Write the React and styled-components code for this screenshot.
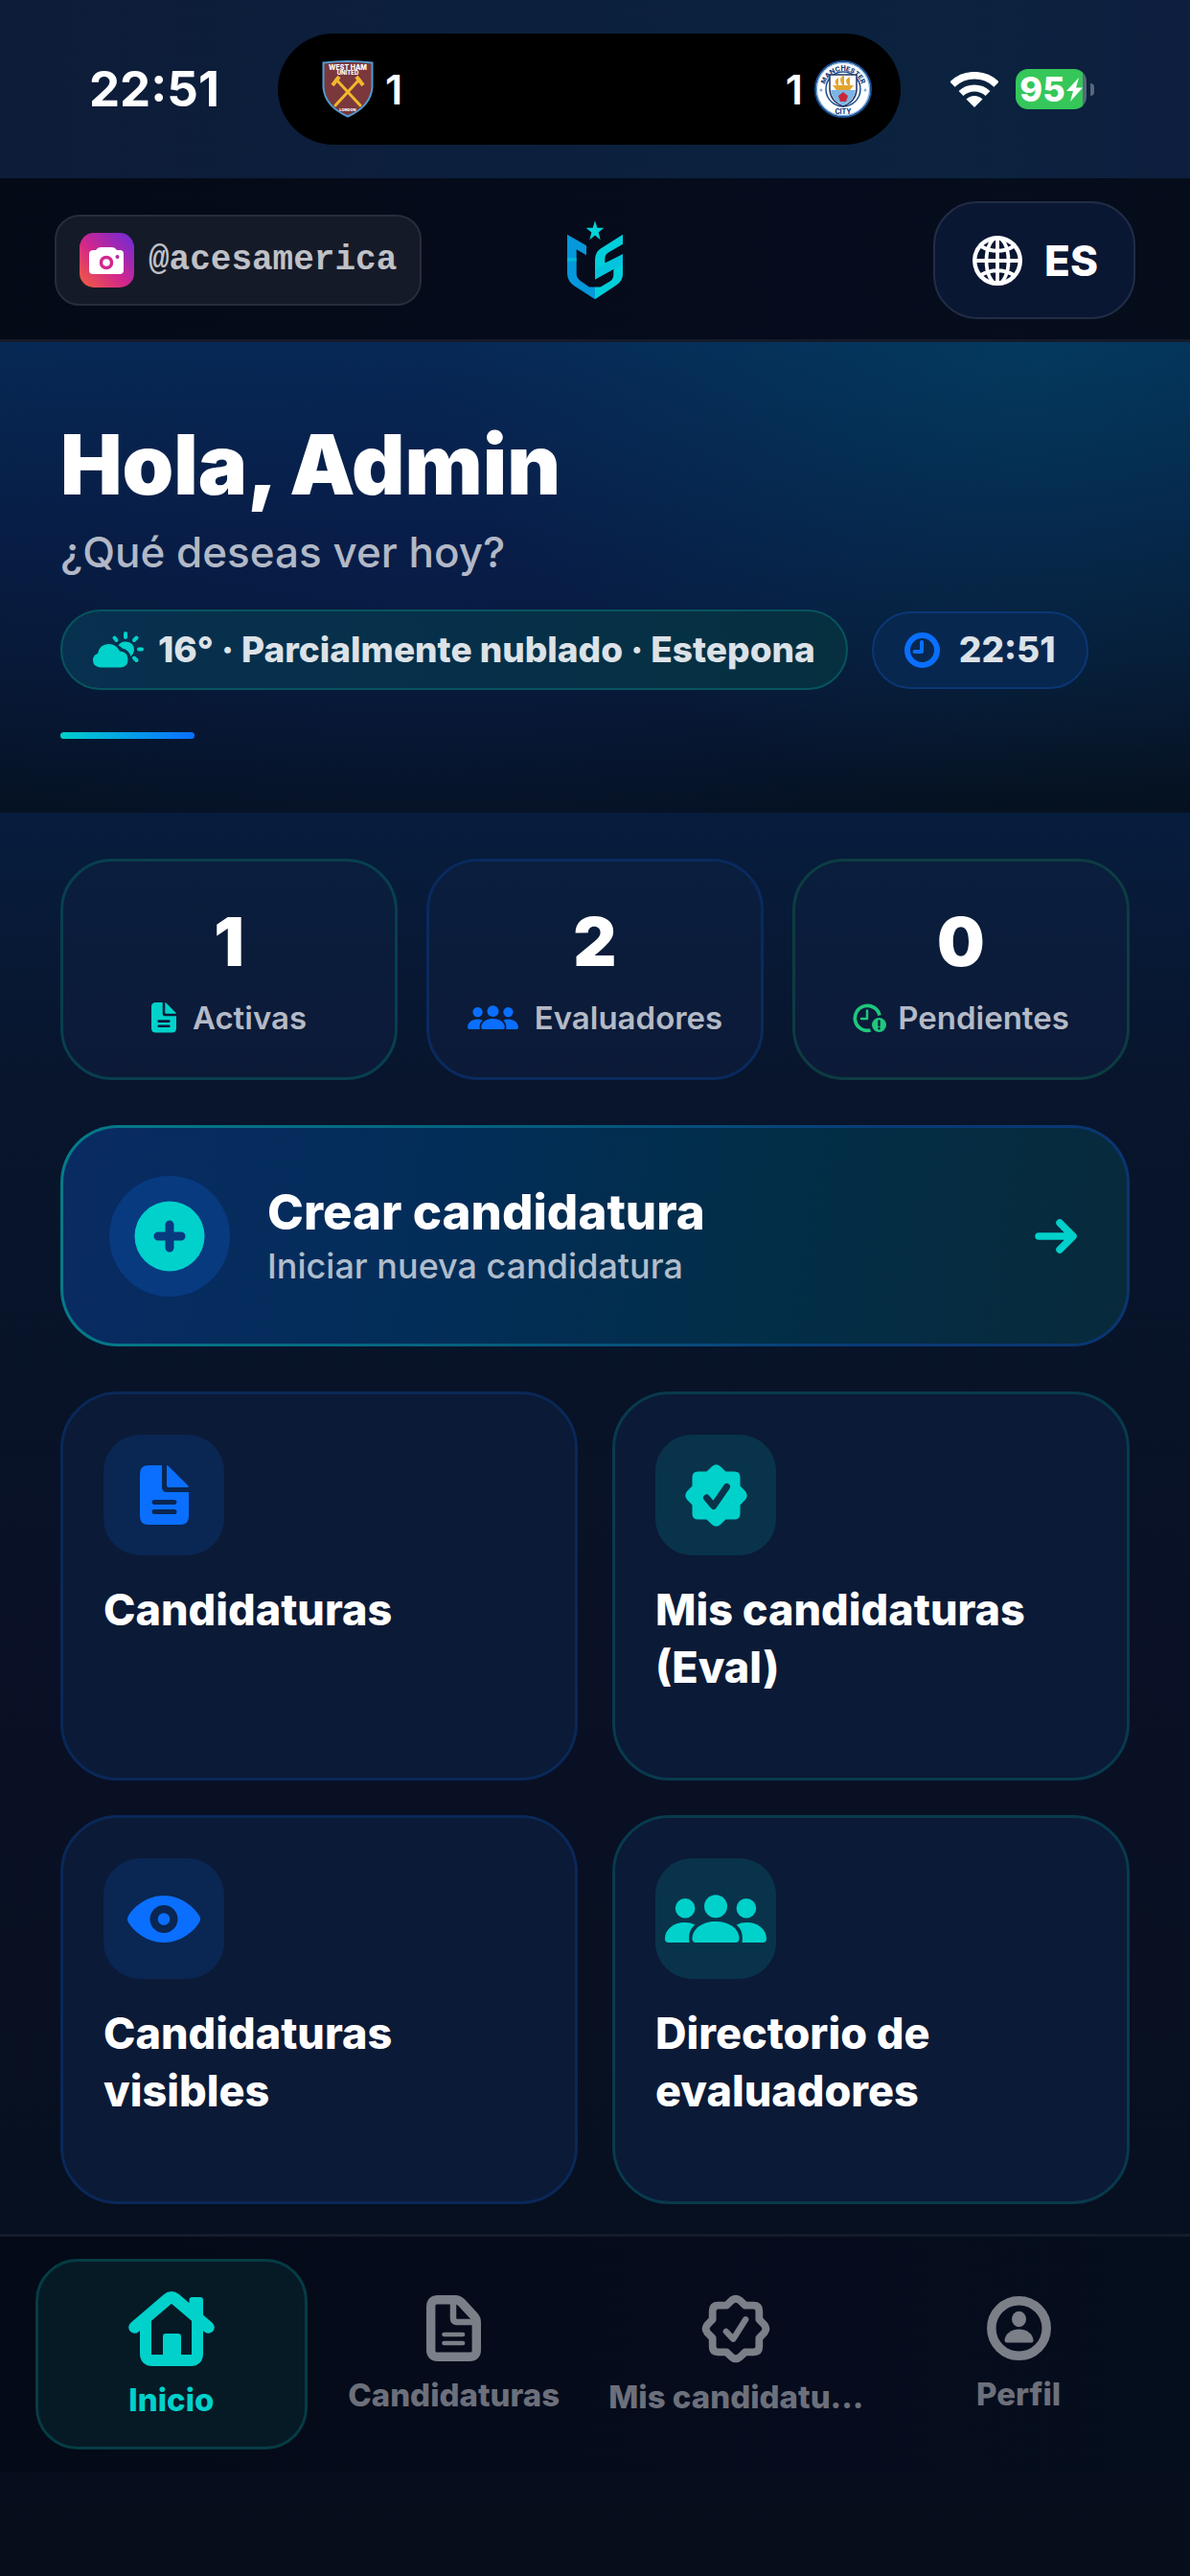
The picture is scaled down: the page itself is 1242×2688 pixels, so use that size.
import React, { useState } from "react";
import styled, { createGlobalStyle } from "styled-components";

const TEAL = "#00d1cb";
const BLUE = "#0a6fff";
const GREEN = "#1fc77c";

const GlobalStyle = createGlobalStyle`
*{ box-sizing: border-box; }
body{
  margin: 0;
  background: #060e1c;
  color: white;
  font-family: Inter, "Liberation Sans", sans-serif;
}
button{
  font-family: inherit;
  color: inherit;
  cursor: pointer;
}
h1, h2, p{ margin: 0; }
svg{ display: block; flex: none; }
`
const Screen = styled.div`
min-height: 100vh;
display: flex;
flex-direction: column;
background: linear-gradient(180deg, #0d1d3a 0px, #071d3e 850px, #08152c 1130px, #081328 1450px, #0a1025 1750px, #071020 2300px, #060d1b 2688px);
`
const StatusBar = styled.div`
height: 186px;
padding: 0 100px 0 93px;
display: grid;
grid-template-columns: 197px 650px 1fr;
align-items: center;
background: linear-gradient(90deg, #0d1c39, #0b213e 60%, #0b233f 80%, #0e1e3e);
`
const Clock = styled.span`
font-size: 51px;
font-weight: 700;
line-height: 60px;
`
const Island = styled.div`
height: 116px;
padding: 0 30px 0 46px;
border-radius: 58px;
background: black;
display: flex;
align-items: center;
justify-content: space-between;
`
const Score = styled.span`
display: flex;
align-items: center;
gap: 12px;
font-size: 43px;
font-weight: 600;
line-height: 52px;
`
const Indicators = styled.div`
display: flex;
align-items: center;
justify-content: flex-end;
gap: 18px;
`
const BatteryWrap = styled.div`
display: flex;
align-items: center;
gap: 4px;
`
const BatteryBody = styled.span`
width: 74px;
height: 42px;
border-radius: 13px;
background: linear-gradient(90deg, #35c759 95%, #56687c 95%);
display: flex;
align-items: center;
justify-content: center;
gap: 1px;
font-size: 36px;
font-weight: 800;
`
const BatteryNub = styled.span`
width: 4px;
height: 13px;
border-radius: 0 4px 4px 0;
background: #56687c;
`
const Header = styled.header`
padding: 24px 57px 21px;
border-bottom: 3px solid #151b2b;
display: grid;
grid-template-columns: 1fr auto 1fr;
align-items: center;
background: linear-gradient(90deg, #040a16, #060c1d 70%, #050d1b);
`
const HandleLink = styled.a`
justify-self: start;
height: 95px;
padding: 0 24px;
border: 2px solid #272d3a;
border-radius: 26px;
background: #151a28;
display: flex;
align-items: center;
gap: 15px;
color: #bfc1c6;
font-family: "Liberation Mono", monospace;
font-size: 36px;
font-weight: 700;
text-decoration: none;
`
const LanguageButton = styled.button`
justify-self: end;
height: 123px;
padding: 0 37px 0 39px;
border: 2px solid #212c45;
border-radius: 46px;
background: #0a1733;
display: flex;
align-items: center;
gap: 23px;
font-size: 44px;
font-weight: 800;
`
const Hero = styled.section`
padding: 76px 63px 77px;
background:
  radial-gradient(620px 480px at 86% 0%, rgba(0, 80, 108, 0.4), rgba(0, 60, 80, 0) 100%),
  radial-gradient(760px 420px at 36% 46%, rgba(10, 30, 92, 0.35), rgba(8, 26, 72, 0) 100%),
  linear-gradient(180deg, #062a54 0%, #071d40 42%, #07172f 75%, #05111f 100%);
`
const Greeting = styled.h1`
font-size: 86px;
font-weight: 900;
line-height: 104px;
`
const Question = styled.p`
margin-top: 12px;
font-size: 44px;
font-weight: 500;
line-height: 54px;
color: #b2b8c6;
`
const PillRow = styled.div`
margin-top: 33px;
display: flex;
align-items: center;
gap: 25px;
`
const Pill = styled.span`
height: ${p => p.$tone === "teal" ? 84 : 81}px;
padding: 0 32px;
border: 2px solid ${p => p.$tone === "teal" ? "#07545f" : "#0b3775"};
border-radius: 42px;
background: ${p => p.$tone === "teal" ? "linear-gradient(90deg, #08304f, #06304a 50%, #06303f)" : "#08274f"};
display: flex;
align-items: center;
gap: ${p => p.$tone === "teal" ? 15 : 20}px;
font-size: 37px;
font-weight: 800;
line-height: 42px;
white-space: nowrap;
color: #dce2e7;
`
const Accent = styled.div`
width: 140px;
height: 7px;
margin-top: 44px;
border-radius: 4px;
background: linear-gradient(90deg, #00d1cb, #0a6fff);
`
const Main = styled.main`
padding: 48px 63px 31px;
display: flex;
flex-direction: column;
gap: 47px;
`
const Stats = styled.div`
display: grid;
grid-template-columns: repeat(3, 1fr);
gap: 30px;
`
const StatCard = styled.div`
height: 231px;
padding-top: 42px;
border: 3px solid ${p => p.$line};
border-radius: 54px;
background: linear-gradient(180deg, #0a1e3d, #0c1a38);
display: flex;
flex-direction: column;
align-items: center;
gap: 18px;
`
const StatValue = styled.strong`
font-size: 70px;
font-weight: 900;
line-height: 84px;
`
const StatLabel = styled.span`
display: flex;
align-items: center;
gap: ${p => p.$gap}px;
font-size: 33px;
font-weight: 600;
line-height: 38px;
color: #b4bac6;
`
const CreateButton = styled.button`
height: 231px;
padding: 0 52px 0 48px;
border: 3px solid transparent;
border-radius: 60px;
background:
  linear-gradient(100deg, #092b62, #032d59 35%, #022e48 65%, #082a3b) padding-box,
  linear-gradient(100deg, #057c8a, #06607f 40%, #083b78 75%, #0a3570) border-box;
display: flex;
align-items: center;
gap: 39px;
text-align: left;
`
const CreateIcon = styled.span`
width: 126px;
height: 126px;
border-radius: 50%;
background: #083a80;
display: flex;
align-items: center;
justify-content: center;
`
const CreateText = styled.span`
flex: 1;
display: flex;
flex-direction: column;
`
const CreateTitle = styled.span`
font-size: 51px;
font-weight: 800;
line-height: 62px;
`
const CreateHint = styled.span`
font-size: 36px;
font-weight: 500;
line-height: 50px;
color: #b0bdcc;
`
const Tiles = styled.div`
display: grid;
grid-template-columns: repeat(2, 1fr);
gap: 36px;
`
const Tile = styled.button`
min-height: 406px;
padding: 42px;
border: 3px solid ${p => p.$tone === "teal" ? "#083a4d" : "#0a2858"};
border-radius: 60px;
background: #0b1a36;
display: flex;
flex-direction: column;
align-items: flex-start;
gap: 27px;
text-align: left;
`
const TileIcon = styled.span`
width: 126px;
height: 126px;
border-radius: 38px;
background: ${p => p.$tone === "teal" ? "#09334b" : "#0a2652"};
display: flex;
align-items: center;
justify-content: center;
`
const TileTitle = styled.h2`
font-size: 45px;
font-weight: 800;
line-height: 60px;
`
const TabBar = styled.nav`
padding: 23px 37px 24px;
border-top: 3px solid #141b2a;
background: linear-gradient(90deg, #040a17, #060c1d 70%, #050e1d);
display: grid;
grid-template-columns: repeat(4, minmax(0, 1fr));
gap: 11px;
`
const Tab = styled.a`
height: 199px;
border: 3px solid ${p => p.$active ? "#053c45" : "transparent"};
border-radius: 44px;
background: ${p => p.$active ? "#061a26" : "transparent"};
display: flex;
flex-direction: column;
align-items: center;
justify-content: center;
gap: 16px;
color: ${p => p.$active ? TEAL : "#6c707b"};
font-size: 33px;
font-weight: 800;
line-height: 38px;
white-space: nowrap;
text-decoration: none;
`

const SEAL = "M22.5 7.5L28 2.2Q32.5-1.6 37 2.2L42.5 7.5H51.5Q57.5 7.5 57.5 13.5V22.5L62.8 28Q66.6 32.5 62.8 37L57.5 42.5V51.5Q57.5 57.5 51.5 57.5H42.5L37 62.8Q32.5 66.6 28 62.8L22.5 57.5H13.5Q7.5 57.5 7.5 51.5V42.5L2.2 37Q-1.6 32.5 2.2 28L7.5 22.5V13.5Q7.5 7.5 13.5 7.5Z";

const HammersCrest = () => (
  <svg width="54" height="60" viewBox="0 0 54 60">
    <path d="M1.5 2.5Q27-.5 52.5 2.5V28Q51 48 27 58.5Q3 48 1.5 28Z" fill="#7a383c" stroke="#4f9bd0" strokeWidth="2" />
    <g stroke="#f3b72c" strokeWidth="3" strokeLinecap="round">
      <path d="M15 20L40 47M39 20L14 47" />
      <path d="M11 26L18 17M43 26L36 17" strokeWidth="4" strokeLinecap="butt" />
    </g>
    <g fill="#fff" fontFamily="Inter, sans-serif" fontWeight="800" textAnchor="middle">
      <text x="27" y="10" fontSize="7">WEST HAM</text>
      <text x="27" y="15" fontSize="6">UNITED</text>
      <text x="27" y="53" fontSize="4">LONDON</text>
    </g>
  </svg>
)
const CityCrest = () => (
  <svg width="60" height="60" viewBox="0 0 60 60">
    <circle cx="30" cy="30" r="29" fill="#fff" stroke="#1c4f93" strokeWidth="2" />
    <circle cx="30" cy="30" r="27.500" fill="none" stroke="#6ba6dc" strokeWidth="1" />
    <circle cx="30" cy="30" r="18" fill="#fff" stroke="#1c4f93" strokeWidth="1.500" />
    <path d="M16 15H44V31Q43 43 30 48Q17 43 16 31Z" fill="#fff" stroke="#22325c" strokeWidth="1.500" />
    <path d="M17 31H43Q42 42 30 47Q18 42 17 31Z" fill="#7db4e3" />
    <path d="M19 26H41L37 31H23Z" fill="#e2a52d" />
    <path d="M24 25Q21 22 24 20ZM30 25Q26 20 30 17ZM36 25Q32 21 36 19Z" fill="#e2a52d" stroke="#e2a52d" strokeWidth="2" />
    <path d="M30 33L35 37L33 43H27L25 37Z" fill="#c6283a" />
    <path id="cityTop" d="M10 31A20 20 0 0 1 50 31" fill="none" />
    <g fill="#1d3f7d" fontFamily="Inter, sans-serif" fontWeight="800">
      <text fontSize="7" textAnchor="middle"><textPath href="#cityTop" startOffset="50%">MANCHESTER</textPath></text>
      <text x="30" y="56" fontSize="7" textAnchor="middle">CITY</text>
    </g>
    <circle cx="7" cy="31" r="1.500" fill="#7db4e3" />
    <circle cx="53" cy="31" r="1.500" fill="#7db4e3" />
  </svg>
)
const WifiIcon = () => (
  <svg width="50" height="37" viewBox="0 0 50 37" fill="none" stroke="#fff">
    <path d="M2 13A33 33 0 0 1 48 13" strokeWidth="7.500" />
    <path d="M11 22.500A20.500 20.500 0 0 1 39 22.500" strokeWidth="7" />
    <path d="M25 37L16.500 28.500A12 12 0 0 1 33.500 28.500Z" fill="#fff" stroke="none" />
  </svg>
)
const BoltIcon = () => (
  <svg width="17" height="25" viewBox="0 0 17 25">
    <path d="M13 0L0 14H7L4 25L17 10.500H10Z" fill="#fff" />
  </svg>
)
const CameraBadge = () => (
  <svg width="57" height="57" viewBox="0 0 57 57">
    <defs>
      <linearGradient id="insta" x1="0" y1="1" x2="1" y2="0">
        <stop offset="0" stopColor="#f2603a" />
        <stop offset=".45" stopColor="#d3268c" />
        <stop offset="1" stopColor="#6a2bdc" />
      </linearGradient>
    </defs>
    <rect width="57" height="57" rx="15" fill="url(#insta)" />
    <path d="M15 18H17Q19 15 22 15H34Q37 15 39 18H42Q46 18 46 22V39Q46 43 42 43H14Q10 43 10 39V22Q10 18 15 18Z" fill="#fff" />
    <circle cx="28" cy="31" r="5.500" fill="#fff" stroke="#d3268c" strokeWidth="3.500" />
    <circle cx="39.500" cy="25" r="2" fill="#b52aa0" />
  </svg>
)
const Logo = () => (
  <svg width="60" height="83" viewBox="93 60 180 248">
    <path d="M183 60L190 83H211L194 97L200 120L183 106L166 120L172 97L155 83H176Z" fill="#00d3da" />
    <path d="M96 104L156 138V168L125 150V226Q125 240 138 249L165 268H183V306L120 266Q96 250 96 225Z" fill="#0598db" />
    <path d="M96 177H125V187H96Z" fill="#00b9d8" />
    <path d="M270 104V134L225 160Q214 167 214 180V193L270 165V228Q270 248 250 262L183 306V268H200L230 250Q241 243 241 230V212L183 244V182Q183 160 200 148Z" fill="#00cfdb" />
    <path d="M183 244V215L270 165V196Z" fill="#04c3dc" />
  </svg>
)
const GlobeIcon = () => (
  <svg width="52" height="52" viewBox="0 0 52 52" fill="none" stroke="#fff" strokeWidth="3.800">
    <circle cx="26" cy="26" r="23.800" strokeWidth="4.400" />
    <ellipse cx="26" cy="26" rx="11.500" ry="24" />
    <path d="M26 2V50M2 26H50M8 10.500Q26 21 44 10.500M8 41.500Q26 31 44 41.500" />
  </svg>
)
const CloudSunIcon = () => (
  <svg width="53" height="38" viewBox="0 0 53 38" fill={TEAL}>
    <path d="M8 37.500Q0 37 0 30Q0 24.500 5 23Q7 13 16.500 13Q24.500 13 28 20.500Q36.500 21 36.500 29Q36.500 37 29 37.500Z" />
    <path d="M26.500 14.500Q29 10.500 34 10.500Q43 11 43 19.500Q42.500 23.500 39.500 26Q37.500 19 30.500 17.500Q29 15.500 26.500 14.500Z" />
    <path d="M34 2V6M48 18.500H51M43 9L45.500 6.500M24.500 9L22.500 6.500M43 27.500L45.500 30" stroke={TEAL} strokeWidth="4" strokeLinecap="round" />
  </svg>
)
const ClockIcon = () => (
  <svg width="37" height="37" viewBox="0 0 37 37" fill="none" stroke={BLUE} strokeLinecap="round" strokeLinejoin="round">
    <circle cx="18.500" cy="18.500" r="15.500" strokeWidth="6" />
    <path d="M18 10V20H10.500" strokeWidth="4" />
  </svg>
)
const FileIcon = ({ width, color }) => (
  <svg width={width} viewBox="0 0 51 62" fill={color}>
    <path fillRule="evenodd" d="M9 0H23V23Q23 28 28 28H51V53Q51 62 42 62H9Q0 62 0 53V9Q0 0 9 0ZM15 36A2.500 2.500 0 0 0 15 41H36A2.500 2.500 0 0 0 36 36ZM15 46A2.500 2.500 0 0 0 15 51H36A2.500 2.500 0 0 0 36 46Z" />
    <path d="M28 0Q29 0 30 1L50.500 21.500Q51 23 50 23H30Q28 23 28 21Z" />
  </svg>
)
const PeopleIcon = ({ width, color }) => (
  <svg width={width} viewBox="0 0 108 51" fill={color}>
    <circle cx="21.500" cy="14.500" r="10.500" />
    <circle cx="54" cy="12.500" r="12.200" />
    <circle cx="86.500" cy="14.500" r="10.500" />
    <path d="M4 51Q0 51 0 47C0 37 9 29.500 21 29.500Q27 29.500 32 32C26 37 25 43 26 51Z" />
    <path d="M104 51Q108 51 108 47C108 37 99 29.500 87 29.500Q81 29.500 76 32C82 37 83 43 82 51Z" />
    <path d="M33 51Q29 51 29 47C29 36 40 28.500 54 28.500S79 36 79 47Q79 51 75 51Z" />
  </svg>
)
const PendingIcon = () => (
  <svg width="35" height="31" viewBox="0 0 35 31" fill="none" stroke={GREEN} strokeLinecap="round" strokeLinejoin="round">
    <path d="M28 12.500A13 13 0 1 0 18.500 28" strokeWidth="3.700" strokeLinecap="butt" />
    <path d="M15 7.500V16H9" strokeWidth="2.500" />
    <circle cx="27.500" cy="22.500" r="7.500" fill={GREEN} stroke="none" />
    <path d="M27.500 18.500V23M27.500 26V26.200" stroke="#0b1c39" strokeWidth="2.400" />
  </svg>
)
const PlusIcon = () => (
  <svg width="74" height="74" viewBox="0 0 74 74">
    <circle cx="37" cy="37" r="36.500" fill={TEAL} />
    <path d="M37 25V49M25 37H49" stroke="#083a80" strokeWidth="9" strokeLinecap="round" />
  </svg>
)
const ArrowIcon = () => (
  <svg width="44" height="36" viewBox="0 0 44 36" fill="none" stroke={TEAL} strokeWidth="7.500" strokeLinecap="round" strokeLinejoin="round">
    <path d="M4 18H39M26 4L40 18L26 32" />
  </svg>
)
const SealIcon = () => (
  <svg width="65" height="65" viewBox="0 0 65 65">
    <path d={SEAL} fill={TEAL} />
    <path d="M22.500 35L29.700 43.500L43.500 23.500" fill="none" stroke="#09334b" strokeWidth="7" strokeLinecap="round" strokeLinejoin="round" />
  </svg>
)
const EyeIcon = () => (
  <svg width="76" height="49" viewBox="0 0 76 49" fill={BLUE}>
    <path fillRule="evenodd" d="M38 0C57 0 70 13 75 21Q77 24.500 75 28C70 36 57 49 38 49S6 36 1 28Q-1 24.500 1 21C6 13 19 0 38 0ZM38 10A14.500 14.500 0 1 0 38 39A14.500 14.500 0 1 0 38 10Z" />
    <circle cx="38" cy="24.500" r="6.300" />
  </svg>
)
const HomeIcon = () => (
  <svg width="90" height="78" viewBox="0 0 90 78" fill="none" stroke="currentColor">
    <path d="M6.500 37.500L41 8Q45 4.500 49 8L83.500 37.500" strokeWidth="12.500" strokeLinecap="round" />
    <path d="M18 30V65Q18 72 25 72H65Q72 72 72 65V30" strokeWidth="12" />
    <path d="M36 47Q36 44 39 44H52Q55 44 55 47V68H36ZM63.500 9Q63.500 6 66.500 6H75Q78 6 78 9V32L63.500 22Z" fill="currentColor" stroke="none" />
  </svg>
)
const FileLineIcon = () => (
  <svg width="57" height="69" viewBox="0 0 57 69" fill="none" stroke="#7b7f88" strokeLinejoin="round">
    <path d="M12 4.700H30Q34 4.700 37 8L49.500 21.500Q52.300 24.500 52.300 28V57Q52.300 64.300 45 64.300H12Q4.700 64.300 4.700 57V12Q4.700 4.700 12 4.700Z" strokeWidth="9.400" />
    <path d="M28 6V24Q28 28 32 28H51" strokeWidth="6.500" />
    <path d="M18.500 41H38M18.500 50H38" strokeWidth="4.700" strokeLinecap="round" />
  </svg>
)
const SealLineIcon = () => (
  <svg width="72" height="72" viewBox="-4.500 -4.500 74 74" fill="none" stroke="#7b7f88" strokeLinecap="round" strokeLinejoin="round">
    <path d={SEAL} strokeWidth="8" />
    <path d="M22 35.500L29.700 43.500L43 22.500" strokeWidth="6.500" />
  </svg>
)
const ProfileIcon = () => (
  <svg width="67" height="67" viewBox="0 0 67 67" fill="#7b7f88">
    <circle cx="33.500" cy="33.500" r="28.700" fill="none" stroke="#7b7f88" strokeWidth="9.500" />
    <ellipse cx="33.500" cy="24" rx="7.500" ry="8.300" />
    <path d="M21 48.500Q18.500 48.500 18.500 46C19 39 26 34.500 33.500 34.500S48 39 48.500 46Q48.500 48.500 46 48.500Z" />
  </svg>
)

const stats = [
  { value: 1, label: "Activas", line: "#083f4f", gap: 17, icon: <FileIcon width={26} color={TEAL} /> },
  { value: 2, label: "Evaluadores", line: "#0a2a5e", gap: 17, icon: <PeopleIcon width={53} color={BLUE} /> },
  { value: 0, label: "Pendientes", line: "#0d3c42", gap: 12, icon: <PendingIcon /> },
];
const tiles = [
  { title: "Candidaturas", tone: "blue", icon: <FileIcon width={51} color={BLUE} /> },
  { title: "Mis candidaturas (Eval)", tone: "teal", icon: <SealIcon /> },
  { title: "Candidaturas visibles", tone: "blue", icon: <EyeIcon /> },
  { title: "Directorio de evaluadores", tone: "teal", icon: <PeopleIcon width={106} color={TEAL} /> },
];
const tabs = [
  { label: "Inicio", icon: <HomeIcon /> },
  { label: "Candidaturas", icon: <FileLineIcon /> },
  { label: "Mis candidatu...", icon: <SealLineIcon /> },
  { label: "Perfil", icon: <ProfileIcon /> },
];

const App = () => {
  const [activeTab, setActiveTab] = useState("Inicio");

  return (
    <Screen>
      <GlobalStyle />
      <StatusBar>
        <Clock>22:51</Clock>
        <Island>
          <Score><HammersCrest />1</Score>
          <Score>1<CityCrest /></Score>
        </Island>
        <Indicators>
          <WifiIcon />
          <BatteryWrap>
            <BatteryBody>95<BoltIcon /></BatteryBody>
            <BatteryNub />
          </BatteryWrap>
        </Indicators>
      </StatusBar>
      <Header>
        <HandleLink href="#instagram"><CameraBadge />@acesamerica</HandleLink>
        <Logo />
        <LanguageButton><GlobeIcon />ES</LanguageButton>
      </Header>
      <Hero>
        <Greeting>Hola, Admin</Greeting>
        <Question>¿Qué deseas ver hoy?</Question>
        <PillRow>
          <Pill $tone="teal"><CloudSunIcon />16° · Parcialmente nublado · Estepona</Pill>
          <Pill $tone="blue"><ClockIcon />22:51</Pill>
        </PillRow>
        <Accent />
      </Hero>
      <Main>
        <Stats>
          {stats.map((stat) => (
            <StatCard key={stat.label} $line={stat.line}>
              <StatValue>{stat.value}</StatValue>
              <StatLabel $gap={stat.gap}>{stat.icon}{stat.label}</StatLabel>
            </StatCard>
          ))}
        </Stats>
        <CreateButton>
          <CreateIcon><PlusIcon /></CreateIcon>
          <CreateText>
            <CreateTitle>Crear candidatura</CreateTitle>
            <CreateHint>Iniciar nueva candidatura</CreateHint>
          </CreateText>
          <ArrowIcon />
        </CreateButton>
        <Tiles>
          {tiles.map((tile) => (
            <Tile key={tile.title} $tone={tile.tone}>
              <TileIcon $tone={tile.tone}>{tile.icon}</TileIcon>
              <TileTitle>{tile.title}</TileTitle>
            </Tile>
          ))}
        </Tiles>
      </Main>
      <TabBar>
        {tabs.map((tab) => (
          <Tab
            key={tab.label}
            href="#"
            $active={tab.label === activeTab}
            onClick={() => setActiveTab(tab.label)}>
            {tab.icon}
            <span>{tab.label}</span>
          </Tab>
        ))}
      </TabBar>
    </Screen>
  );
}
export default App;
